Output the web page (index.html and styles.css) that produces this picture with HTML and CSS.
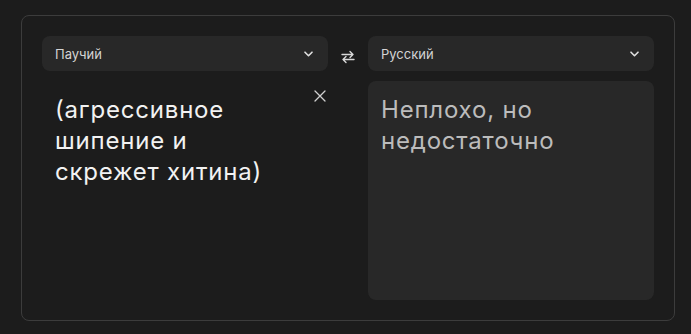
FILE: index.html
```html
<!DOCTYPE html>
<html lang="ru">
<head>
  <meta charset="UTF-8" />
  <title>Переводчик</title>
  <link rel="stylesheet" href="styles.css">
</head>
<body>
  <div class="card">
    <div class="row">
      <div class="select">
        <span>Паучий</span>
        <svg class="chev" width="9" height="6" viewBox="0 0 9 6"><path d="M1 1.2l3.5 3.5 3.5-3.5" fill="none" stroke="#e0e0e0" stroke-width="1.6" stroke-linecap="round" stroke-linejoin="round"/></svg>
      </div>
      <div class="swap">
        <svg width="14" height="14" viewBox="0 0 14 14"><path d="M1 4.5h11M9 1.5l3 3-3 3M13 9.5H2M5 6.5l-3 3 3 3" fill="none" stroke="#d8d8d8" stroke-width="1.4" stroke-linecap="round" stroke-linejoin="round"/></svg>
      </div>
      <div class="select">
        <span>Русский</span>
        <svg class="chev" width="9" height="6" viewBox="0 0 9 6"><path d="M1 1.2l3.5 3.5 3.5-3.5" fill="none" stroke="#e0e0e0" stroke-width="1.6" stroke-linecap="round" stroke-linejoin="round"/></svg>
      </div>
    </div>
    <div class="row boxes">
      <div class="box source">
        <div class="text">(агрессивное шипение и скрежет хитина)</div>
        <button class="clear">
          <svg width="12" height="12" viewBox="0 0 12 12"><path d="M1 1l10 10M11 1L1 11" stroke="#d0d0d0" stroke-width="1.3" stroke-linecap="round"/></svg>
        </button>
      </div>
      <div class="box result">
        <div class="text">Неплохо, но недостаточно</div>
      </div>
    </div>
  </div>
</body>
</html>
```

FILE: styles.css
```css
body {
    margin: 0;
    background: #1c1c1c;
    font-family: Inter, "Noto Sans", sans-serif;
}

.card {
    margin: 15px 16px 0 21px;
    height: 264px;
    padding: 20px;
    border: 1px solid #3c3c3c;
    border-radius: 8px;
    display: flex;
    flex-direction: column;
    gap: 10px;
}

.row {
    display: flex;
    align-items: center;
}

.select {
    flex: 1;
    height: 35px;
    background: #282828;
    border-radius: 8px;
    display: flex;
    align-items: center;
    justify-content: space-between;
    padding: 0 13px;
    font-size: 13px;
    color: #d4d4d4;
}

.chev {
    margin-right: 2px;
}

.swap {
    width: 40px;
    display: flex;
    justify-content: center;
    padding-top: 6px;
}

.boxes {
    flex: 1;
    align-items: stretch;
    gap: 40px;
}

.box {
    flex: 1;
    border-radius: 8px;
    padding: 13px 13px;
    position: relative;
}

.result {
    background: #282828;
}

.text {
    font-size: 24px;
    line-height: 31px;
    letter-spacing: 0.8px;
    color: #f2f2f2;
    padding-right: 40px;
}

.result .text {
    color: #bcbcbc;
}

.clear {
    position: absolute;
    top: 9px;
    right: 2px;
    background: none;
    border: 0;
    padding: 0;
}
```
